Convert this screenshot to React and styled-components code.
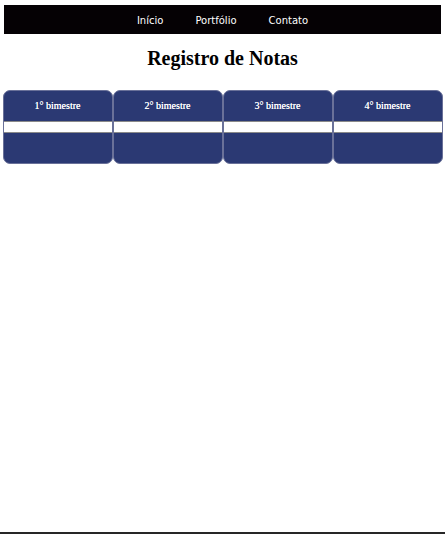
import React from "react";
import styled, { createGlobalStyle } from "styled-components";

const GlobalStyle = createGlobalStyle`
  html, body {
    margin: 0;
    padding: 0;
    background: #fff;
  }
  body {
    font-family: "Liberation Serif", serif;
  }
`;

const Page = styled.div`
  min-height: 100vh;
  display: flex;
  flex-direction: column;
`;

const NavBar = styled.nav`
  width: 98%;
  margin: 5px auto 0;
  height: 29px;
  background: #050104;
  display: flex;
  justify-content: center;
  align-items: center;
`;

const NavLink = styled.a`
  color: #fff;
  text-decoration: none;
  font-family: "DejaVu Sans", Verdana, sans-serif;
  font-size: 10px;
  padding: 2px 16px 0;
`;

const Title = styled.h1`
  margin: 13px 0 20px;
  text-align: center;
  font-size: 20px;
  font-weight: bold;
`;

const Grid = styled.div`
  width: 440px;
  margin: 0 auto;
  display: grid;
  grid-template-columns: repeat(4, 1fr);
`;

const Card = styled.div`
  background: #2b3973;
  border: 1px solid #6a7199;
  border-radius: 7px;
  display: flex;
  flex-direction: column;
  overflow: hidden;
`;

const CardHeader = styled.div`
  height: 30px;
  padding-bottom: 2px;
  box-sizing: border-box;
  display: flex;
  align-items: center;
  justify-content: center;
  color: #fff;
  font-size: 10px;
  text-shadow: 0 0 0.3px #fff;
`;

const GradeInput = styled.input`
  box-sizing: border-box;
  width: 100%;
  height: 12px;
  margin: 0;
  padding: 0;
  border: none;
  border-top: 1px solid #8a8a8a;
  border-bottom: 1px solid #8a8a8a;
  background: #fff;
  outline: none;
`;

const CardBody = styled.div`
  height: 30px;
`;

const Footer = styled.footer`
  margin-top: auto;
  height: 2px;
  background: #262626;
`;

const bimestres = ["1° bimestre", "2° bimestre", "3° bimestre", "4° bimestre"];

export default function App() {
  return (
    <Page>
      <GlobalStyle />
      <NavBar>
        <NavLink href="#">Início</NavLink>
        <NavLink href="#">Portfólio</NavLink>
        <NavLink href="#">Contato</NavLink>
      </NavBar>
      <Title>Registro de Notas</Title>
      <Grid>
        {bimestres.map((b) => (
          <Card key={b}>
            <CardHeader>{b}</CardHeader>
            <GradeInput type="text" />
            <CardBody />
          </Card>
        ))}
      </Grid>
      <Footer />
    </Page>
  );
}
